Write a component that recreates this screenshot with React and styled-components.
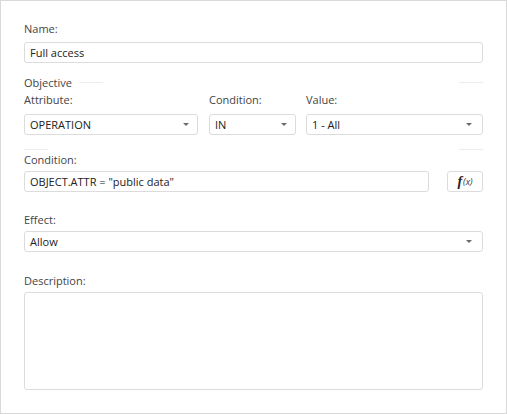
import React from 'react';
import styled, {createGlobalStyle} from 'styled-components';

const GlobalStyle = createGlobalStyle`
  html, body {
    margin: 0;
    padding: 0;
    background: #ffffff;
  }
  body {
    font-family: "Open Sans", "Liberation Sans", sans-serif;
    font-size: 11px;
  }
`;

const Frame = styled.div`
  box-sizing: border-box;
  width: 507px;
  height: 414px;
  border: 1px solid #d9d9d9;
  padding: 20px 23px 0 23px;
  display: flex;
  flex-direction: column;
  background: #fff;
`;

const Label = styled.div`
  color: #444;
  font-size: 11px;
  line-height: 15px;
  height: 15px;
  margin-top: ${(props) => props.top ?? 0}px;
  margin-bottom: ${(props) => props.bottom ?? 5}px;
  white-space: nowrap;
`;

const Box = styled.div`
  box-sizing: border-box;
  height: ${(props) => props.height ?? 21}px;
  width: ${(props) => (props.width ? `${props.width}px` : '100%')};
  border: 1px solid #dcdcdc;
  border-radius: 3px;
  background: #fff;
  padding: 0 0 0 5px;
  display: flex;
  align-items: center;
  justify-content: space-between;
  color: #222;
  font-size: 11px;
  line-height: 19px;
  flex-shrink: 0;
`;

const Arrow = styled.span`
  width: 0;
  height: 0;
  border-left: 3px solid transparent;
  border-right: 3px solid transparent;
  border-top: 3px solid #6b6b6b;
  margin-right: ${(props) => props.right ?? 9}px;
`;

const GroupHead = styled.div`
  display: flex;
  align-items: center;
  height: 15px;
  margin-top: 12px;
  color: #444;
  line-height: 15px;
`;

const Stub = styled.div`
  width: 24px;
  height: 1px;
  background: #ececec;
  margin-left: ${(props) => props.left ?? 0}px;
`;

const Spacer = styled.div`
  flex: 1;
`;

const GroupFoot = styled.div`
  display: flex;
  align-items: center;
  height: 1px;
  margin-top: 14px;
`;

const Row = styled.div`
  display: flex;
  align-items: flex-start;
`;

const Column = styled.div`
  display: flex;
  flex-direction: column;
  width: ${(props) => (props.width ? `${props.width}px` : 'auto')};
  flex: ${(props) => (props.width ? 'none' : 1)};
  margin-right: ${(props) => props.gap ?? 0}px;
`;

const FxButton = styled.div`
  box-sizing: border-box;
  width: 38px;
  height: 21px;
  margin-left: 18px;
  border: 1px solid #dcdcdc;
  border-radius: 3px;
  display: flex;
  align-items: center;
  justify-content: center;
  color: #222;
  font-style: italic;

  b {
    font-family: "Liberation Serif", serif;
    font-size: 14px;
    font-weight: bold;
  }

  span {
    font-size: 9px;
    margin-left: 1px;
    color: #333;
  }
`;

const Select = ({value, width, arrowRight}) => (
  <Box width={width}>
    <span>{value}</span>
    <Arrow right={arrowRight} />
  </Box>
);

export default function App() {
  return (
    <>
      <GlobalStyle />
      <Frame>
        <Label bottom={6}>Name:</Label>
        <Box>Full access</Box>

        <GroupHead>
          Objective
          <Stub left={7} />
          <Spacer />
          <Stub />
        </GroupHead>

        <Row>
          <Column width={174} gap={11}>
            <Label top={2} bottom={7}>Attribute:</Label>
            <Select value="OPERATION" arrowRight={8} />
          </Column>
          <Column width={87} gap={10}>
            <Label top={2} bottom={7}>Condition:</Label>
            <Select value="IN" arrowRight={8} />
          </Column>
          <Column>
            <Label top={2} bottom={7}>Value:</Label>
            <Select value="1 - All" arrowRight={10} />
          </Column>
        </Row>

        <GroupFoot>
          <Stub />
          <Spacer />
          <Stub />
        </GroupFoot>

        <Label top={2} bottom={4}>Condition:</Label>
        <Row>
          <Box width={405}>OBJECT.ATTR = "public data"</Box>
          <FxButton>
            <b>f</b>
            <span>(x)</span>
          </FxButton>
        </Row>

        <Label top={20} bottom={4}>Effect:</Label>
        <Select value="Allow" arrowRight={10} />

        <Label top={21} bottom={4}>Description:</Label>
        <Box height={98} />
      </Frame>
    </>
  );
}
